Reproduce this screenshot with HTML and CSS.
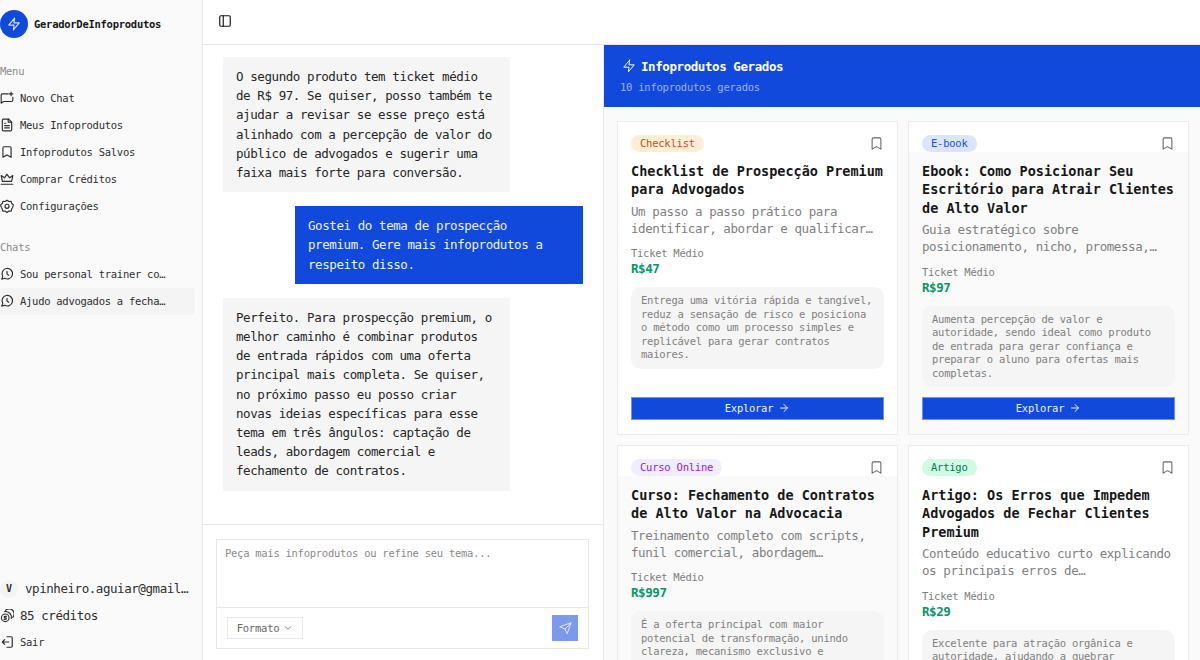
FILE: index.html
```html
<!DOCTYPE html>
<html lang="pt-BR">
<head>
<meta charset="utf-8">
<title>GeradorDeInfoprodutos</title>
<link rel="stylesheet" href="styles.css">
</head>
<body>
<svg class="defs" width="0" height="0" aria-hidden="true">
  <symbol id="i-zap" viewBox="0 0 24 24"><path d="M13 2 3 14h9l-1 8 10-12h-9l1-8z"/></symbol>
  <symbol id="i-bookmark" viewBox="0 0 24 24"><path d="m19 21-7-4-7 4V5a2 2 0 0 1 2-2h10a2 2 0 0 1 2 2v16z"/></symbol>
  <symbol id="i-chat" viewBox="0 0 24 24"><path d="M3 21l1.700-5A9 9 0 1 1 8 19.300L3 21z"/><path d="M12 7.500V12l3 2"/></symbol>
</svg>
<div class="app">
  <aside class="sidebar">
    <div class="brand">
      <span class="brand-logo"><svg class="icon ic14"><use href="#i-zap"/></svg></span>
      <span class="brand-name">GeradorDeInfoprodutos</span>
    </div>
    <div class="nav-label">Menu</div>
    <nav class="nav">
      <a class="nav-item"><svg class="icon" viewBox="0 0 24 24"><path d="M14 5H4a2 2 0 0 0-2 2v14l4-3h14a2 2 0 0 0 2-2v-5"/><path d="M19 2v6M16 5h6"/></svg><span>Novo Chat</span></a>
      <a class="nav-item"><svg class="icon" viewBox="0 0 24 24"><path d="M15 2H6a2 2 0 0 0-2 2v16a2 2 0 0 0 2 2h12a2 2 0 0 0 2-2V7z"/><path d="M14 2v5h6M16 13H8M16 17H8M10 9H8"/></svg><span>Meus Infoprodutos</span></a>
      <a class="nav-item"><svg class="icon"><use href="#i-bookmark"/></svg><span>Infoprodutos Salvos</span></a>
      <a class="nav-item"><svg class="icon" viewBox="0 0 24 24"><path d="M4 16 2 6l5.500 4L12 4l4.500 6L22 6l-2 10z"/><path d="M2 21h20"/></svg><span>Comprar Créditos</span></a>
      <a class="nav-item"><svg class="icon" viewBox="0 0 24 24"><path d="M12 2l3.200 2.300 3.800-.3 1.100 3.700 2.900 2.300L21.800 14l-1.700 3.300L19 21l-3.800-.3L12 23l-3.200-2.300L5 21l-1.100-3.700L2.200 14 1 10l2.900-2.300L5 4l3.800.3z"/><circle cx="12" cy="12.500" r="3.500"/></svg><span>Configurações</span></a>
    </nav>
    <div class="nav-label chats-label">Chats</div>
    <nav class="nav">
      <a class="nav-item"><svg class="icon"><use href="#i-chat"/></svg><span class="trunc">Sou personal trainer com foco em emagrecimento</span></a>
      <a class="nav-item active"><svg class="icon"><use href="#i-chat"/></svg><span class="trunc">Ajudo advogados a fechar contratos de alto valor</span></a>
    </nav>
    <div class="side-foot">
      <div class="user"><span class="avatar">V</span><span class="trunc email">vpinheiro.aguiar@gmail.com</span></div>
      <div class="credits"><svg class="icon" viewBox="0 0 24 24"><circle cx="9" cy="15" r="6.500"/><path d="M9.500 2.200a7.500 7.500 0 0 1 12.300 12.300"/><path d="M8 4.500a10 10 0 0 1 11.500 11.500"/><path d="M11 12.500H8.500a1.300 1.300 0 0 0 0 2.600h1a1.300 1.300 0 0 1 0 2.600H7"/></svg><span>85 créditos</span></div>
      <a class="nav-item logout"><svg class="icon" viewBox="0 0 24 24"><path d="M12 3h7a2 2 0 0 1 2 2v14a2 2 0 0 1-2 2h-7"/><path d="m8 16-4-4 4-4M4 12h11"/></svg><span>Sair</span></a>
    </div>
  </aside>

  <main class="main">
    <header class="topbar">
      <svg class="icon ic14 dark" viewBox="0 0 24 24"><rect x="3" y="3" width="18" height="18" rx="2"/><path d="M9 3v18"/></svg>
    </header>
    <div class="workspace">
      <section class="chat">
        <div class="messages">
          <div class="msg">O segundo produto tem ticket médio de R$ 97. Se quiser, posso também te ajudar a revisar se esse preço está alinhado com a percepção de valor do público de advogados e sugerir uma faixa mais forte para conversão.</div>
          <div class="msg user-msg">Gostei do tema de prospecção premium. Gere mais infoprodutos a respeito disso.</div>
          <div class="msg">Perfeito. Para prospecção premium, o melhor caminho é combinar produtos de entrada rápidos com uma oferta principal mais completa. Se quiser, no próximo passo eu posso criar novas ideias específicas para esse tema em três ângulos: captação de leads, abordagem comercial e fechamento de contratos.</div>
        </div>
        <div class="composer">
          <div class="composer-box">
            <div class="composer-input">Peça mais infoprodutos ou refine seu tema...</div>
            <div class="composer-bar">
              <button class="format">Formato <svg class="icon ic10" viewBox="0 0 24 24"><path d="m6 9 6 6 6-6"/></svg></button>
              <button class="send"><svg class="icon ic14" viewBox="0 0 24 24"><path d="m22 2-7 20-4-9-9-4z"/><path d="M22 2 11 13"/></svg></button>
            </div>
          </div>
        </div>
      </section>

      <section class="panel">
        <header class="panel-head">
          <div class="panel-title"><svg class="icon ic14"><use href="#i-zap"/></svg>Infoprodutos Gerados</div>
          <div class="panel-sub">10 infoprodutos gerados</div>
        </header>
        <div class="cards">
          <article class="card">
            <div class="card-top"><span class="badge b-orange">Checklist</span><svg class="icon bm"><use href="#i-bookmark"/></svg></div>
            <h3 class="card-title">Checklist de Prospecção Premium para Advogados</h3>
            <p class="card-desc">Um passo a passo prático para identificar, abordar e qualificar leads de alto valor.</p>
            <div class="ticket-label">Ticket Médio</div>
            <div class="price">R$47</div>
            <div class="why">Entrega uma vitória rápida e tangível, reduz a sensação de risco e posiciona o método como um processo simples e replicável para gerar contratos maiores.</div>
            <button class="explore">Explorar <svg class="icon arrow" viewBox="0 0 24 24"><path d="M5 12h14M12 5l7 7-7 7"/></svg></button>
          </article>
          <article class="card tinted">
            <div class="card-top"><span class="badge b-blue">E-book</span><svg class="icon bm"><use href="#i-bookmark"/></svg></div>
            <h3 class="card-title">Ebook: Como Posicionar Seu Escritório para Atrair Clientes de Alto Valor</h3>
            <p class="card-desc">Guia estratégico sobre posicionamento, nicho, promessa, autoridade e diferenciação no mercado.</p>
            <div class="ticket-label">Ticket Médio</div>
            <div class="price">R$97</div>
            <div class="why">Aumenta percepção de valor e autoridade, sendo ideal como produto de entrada para gerar confiança e preparar o aluno para ofertas mais completas.</div>
            <button class="explore">Explorar <svg class="icon arrow" viewBox="0 0 24 24"><path d="M5 12h14M12 5l7 7-7 7"/></svg></button>
          </article>
          <article class="card tinted">
            <div class="card-top"><span class="badge b-purple">Curso Online</span><svg class="icon bm"><use href="#i-bookmark"/></svg></div>
            <h3 class="card-title">Curso: Fechamento de Contratos de Alto Valor na Advocacia</h3>
            <p class="card-desc">Treinamento completo com scripts, funil comercial, abordagem consultiva e fechamento de alto valor.</p>
            <div class="ticket-label">Ticket Médio</div>
            <div class="price">R$997</div>
            <div class="why">É a oferta principal com maior potencial de transformação, unindo clareza, mecanismo exclusivo e acompanhamento para resultados consistentes.</div>
            <button class="explore">Explorar <svg class="icon arrow" viewBox="0 0 24 24"><path d="M5 12h14M12 5l7 7-7 7"/></svg></button>
          </article>
          <article class="card">
            <div class="card-top"><span class="badge b-green">Artigo</span><svg class="icon bm"><use href="#i-bookmark"/></svg></div>
            <h3 class="card-title">Artigo: Os Erros que Impedem Advogados de Fechar Clientes Premium</h3>
            <p class="card-desc">Conteúdo educativo curto explicando os principais erros de posicionamento e prospecção.</p>
            <div class="ticket-label">Ticket Médio</div>
            <div class="price">R$29</div>
            <div class="why">Excelente para atração orgânica e autoridade, ajudando a quebrar objeções e levando o leitor para as ofertas principais.</div>
            <button class="explore">Explorar <svg class="icon arrow" viewBox="0 0 24 24"><path d="M5 12h14M12 5l7 7-7 7"/></svg></button>
          </article>
        </div>
      </section>
    </div>
  </main>
</div>
</body>
</html>
```

FILE: styles.css
```css
* { box-sizing: border-box; }
html, body { margin: 0; height: 100%; overflow: hidden; }
body {
  font-family: "DejaVu Sans Mono", "Liberation Mono", monospace;
  font-size: 12.500px;
  letter-spacing: -0.420px;
  color: #171717;
  background: #fff;
}
.defs { position: absolute; }
.app { display: flex; height: 660px; }

.icon {
  width: 14px; height: 14px; flex: none;
  fill: none; stroke: currentColor; stroke-width: 2;
  stroke-linecap: round; stroke-linejoin: round;
}
.ic14 { width: 14px; height: 14px; }
.ic10 { width: 10px; height: 10px; }
.arrow { width: 12px; height: 12px; }
.dark { color: #171717; }

/* Sidebar */
.sidebar {
  width: 203px; flex: none;
  display: flex; flex-direction: column;
  background: #fafafa;
  border-right: 1px solid #e8e8e8;
  padding-bottom: 4px;
  font-size: 10.500px; letter-spacing: -0.270px;
}
.brand { display: flex; align-items: center; gap: 6px; height: 28px; margin-top: 10px; }
.brand-logo {
  width: 28px; height: 28px; border-radius: 50%;
  background: #1249dd; color: #d5defa;
  display: flex; align-items: center; justify-content: center;
}
.brand-name { font-weight: 700; color: #171717; }
.nav-label { color: #8a8a8a; margin-top: 26px; height: 14px; line-height: 14px; }
.chats-label { margin-top: 20px; }
.nav { display: flex; flex-direction: column; margin-top: 7px; }
.nav-item {
  display: flex; align-items: center; gap: 6px;
  height: 27px; width: 195px; padding-bottom: 2px; color: #2e2e2e; border-radius: 2px;
}
.nav-item.active { background: #f4f4f4; }
.trunc { overflow: hidden; text-overflow: ellipsis; white-space: nowrap; width: 146px; }
.side-foot { margin-top: auto; display: flex; flex-direction: column; }
.user { display: flex; align-items: center; height: 27px; font-size: 12.500px; letter-spacing: -0.440px; color: #2e2e2e; }
.avatar {
  width: 18px; height: 18px; border-radius: 50%; background: #f3f3f3;
  display: flex; align-items: center; justify-content: center;
  font-size: 10px; font-weight: 700; margin-right: 7px; flex: none; letter-spacing: 0;
}
.email { width: 164px; }
.credits { display: flex; align-items: center; gap: 6px; height: 27px; font-size: 12.500px; letter-spacing: -0.440px; color: #2e2e2e; }

/* Main */
.main { flex: 1; min-width: 0; display: flex; flex-direction: column; }
.topbar {
  height: 45px; flex: none; display: flex; align-items: center;
  padding-left: 15px; padding-bottom: 2px;
  border-bottom: 1px solid #e8e8e8;
}
.workspace { flex: 1; min-height: 0; display: flex; }

/* Chat */
.chat {
  width: 401px; flex: none; display: flex; flex-direction: column;
  border-right: 1px solid #e8e8e8;
}
.messages {
  flex: 1; min-height: 0; display: flex; flex-direction: column; gap: 14px;
  padding: 12px 20px 0;
}
.msg {
  width: 287px; padding: 10px 13px;
  background: #f5f5f5; color: #262626; line-height: 19.200px;
}
.user-msg { width: 288px; align-self: flex-end; background: #1249dd; color: #f0f3fd; }
.composer { height: 136px; flex: none; border-top: 1px solid #e8e8e8; padding: 14px 13px 0; }
.composer-box { height: 110px; width: 373px; border: 1px solid #e8e8e8; display: flex; flex-direction: column; }
.composer-input { height: 68px; padding: 6px 8px; font-size: 10.500px; letter-spacing: -0.270px; color: #8a8a8a; line-height: 14px; flex: none; border-bottom: 1px solid #e8e8e8; }
.composer-bar { flex: 1; display: flex; align-items: center; justify-content: space-between; padding: 0 10px; }
.format {
  width: 76px; height: 22px; background: #fff; border: 1px solid #e8e8e8;
  display: flex; align-items: center; justify-content: center; gap: 4px;
  font: inherit; font-size: 10.500px; letter-spacing: -0.220px; color: #666; padding: 0;
}
.send {
  width: 26px; height: 26px; border: 0; padding: 0; background: #7c9aeb; color: #eef2fd;
  display: flex; align-items: center; justify-content: center;
}
.send .icon { width: 13px; height: 13px; stroke-width: 1.600; }

/* Panel */
.panel { flex: 1; min-width: 0; display: flex; flex-direction: column; background: #fafafa; }
.panel-head { height: 62px; flex: none; background: #1249dd; color: #fff; padding: 13px 16px 0; }
.panel-title { display: flex; align-items: center; gap: 5px; font-weight: 700; height: 16px; padding-left: 2px; }
.panel-title .icon { stroke-width: 1.700; }
.panel-sub { font-size: 10.500px; letter-spacing: -0.240px; color: #9db3f0; margin-top: 6px; line-height: 14px; }
.cards {
  flex: 1; min-height: 0; overflow: hidden;
  display: grid; grid-template-columns: 281px 281px; grid-auto-rows: max-content;
  gap: 10px; padding: 14px 0 0 13px; align-content: start;
}
.card {
  height: 314px; padding: 13px 13px 14px;
  background: #fff; border: 1px solid #ebebeb;
  display: flex; flex-direction: column;
}
.card.tinted { background: linear-gradient(#fff 30px, #fafafa 30px); }
.card-top { display: flex; align-items: center; justify-content: space-between; height: 17px; }
.badge { height: 17px; line-height: 17px; padding: 0 9px; border-radius: 9px; font-size: 10.500px; letter-spacing: -0.230px; }
.b-orange { background: #ffedd5; color: #c2541c; }
.b-blue { background: #dbe6fe; color: #1d4ed8; }
.b-purple { background: #f0eefe; color: #9320e0; }
.b-green { background: #d1fae5; color: #047857; }
.bm { width: 15px; height: 15px; color: #666; stroke-width: 1.700; }
.card-title { margin: 9.700px 0 0; font-size: 13.500px; letter-spacing: 0; line-height: 18.560px; font-weight: 700; color: #171717; }
.card-desc {
  margin: 3.800px 0 0; color: #808080; line-height: 17px;
  display: -webkit-box; -webkit-box-orient: vertical; -webkit-line-clamp: 2; overflow: hidden;
}
.ticket-label { margin-top: 9.500px; font-size: 10.500px; letter-spacing: -0.270px; color: #808080; line-height: 14px; }
.price { margin-top: 1px; color: #059669; font-weight: 700; line-height: 16px; }
.why {
  margin-top: 10px; padding: 7px 10px 7px;
  background: #f5f5f5; border-radius: 10px;
  font-size: 10.500px; letter-spacing: -0.240px; line-height: 13.500px; color: #808080;
}
.explore {
  margin-top: auto; height: 23px; flex: none; border: 1px solid #6f92ec; padding: 0 0 2px;
  background: #1249dd; color: #f0f3fd;
  display: flex; align-items: center; justify-content: center; gap: 5px;
  font: inherit; font-size: 10.500px; letter-spacing: -0.270px;
}
```
